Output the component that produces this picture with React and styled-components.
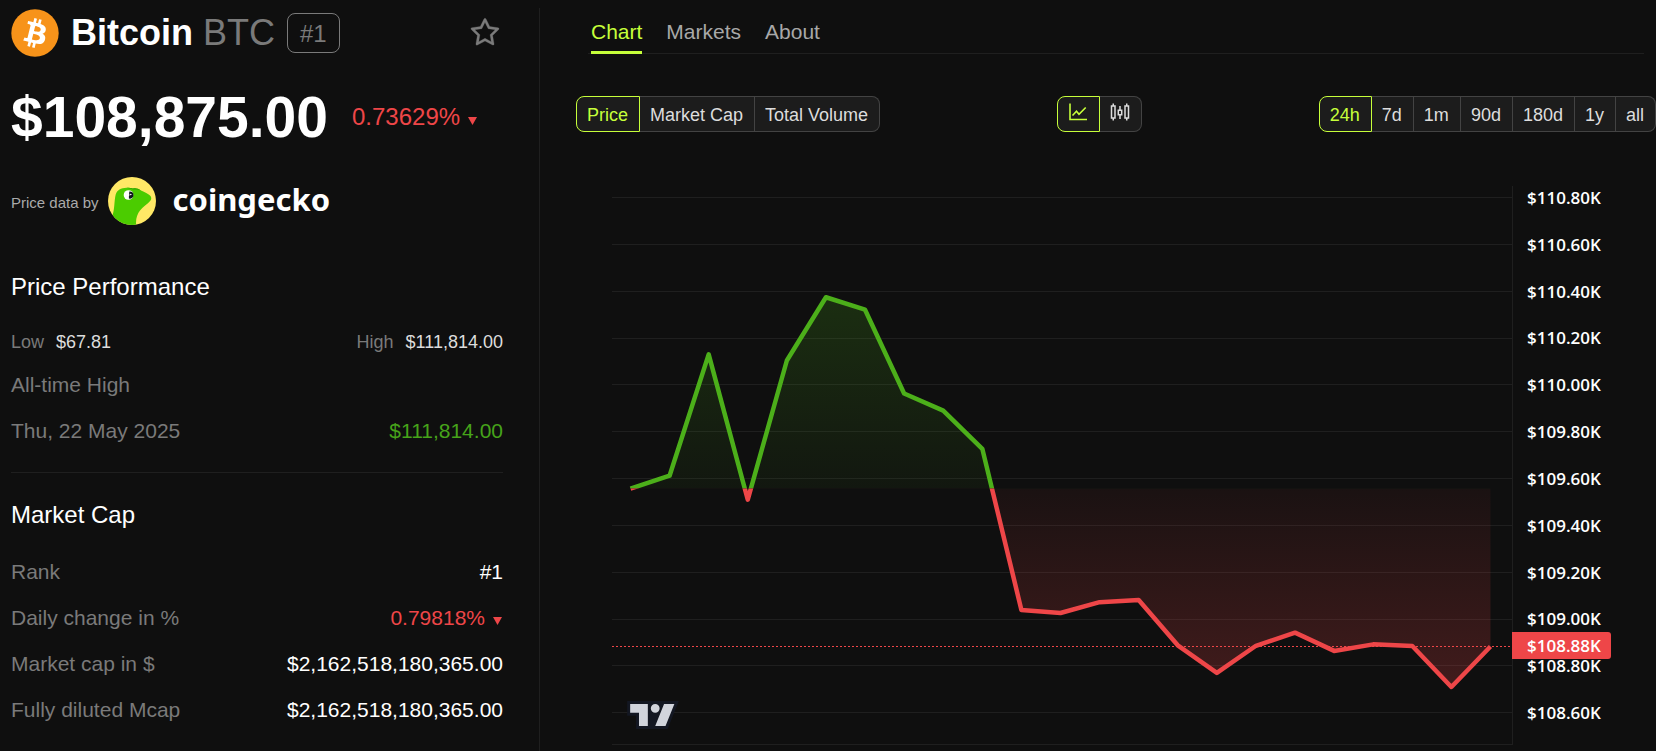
import React, { useState } from "react";
import { AiOutlineStar } from "react-icons/ai";
import styled, { createGlobalStyle } from "styled-components";

const PRICES = [
  109.557, 109.612, 110.13, 109.51, 110.104, 110.374, 110.321, 109.963, 109.89,
  109.727, 109.039, 109.026, 109.072, 109.081, 108.888, 108.77, 108.886,
  108.942, 108.864, 108.892, 108.885, 108.71, 108.883,
];
const TICKS = [
  110.8, 110.6, 110.4, 110.2, 110, 109.8, 109.6, 109.4, 109.2, 109, 108.8,
  108.6,
];
const CAP_ROWS = [
  { label: "Rank", value: "#1" },
  { label: "Daily change in %", value: "0.79818%", down: true },
  { label: "Market cap in $", value: "$2,162,518,180,365.00" },
  { label: "Fully diluted Mcap", value: "$2,162,518,180,365.00" },
];
const TABS = ["Chart", "Markets", "About"];
const METRICS = ["Price", "Market Cap", "Total Volume"];
const RANGES = ["24h", "7d", "1m", "90d", "180d", "1y", "all"];

const WIDTH = 900;
const HEIGHT = 559;

const toX = (i) => 18.5 + i * 39.09;
const toY = (price) => 11.5 + (110.8 - price) * 234.2;

const BitcoinLogo = () => (
  <svg width="48" height="48" viewBox="0 0 32 32" aria-hidden="true">
    <circle cx="16" cy="16" r="15.800" fill="#f7931a" />
    <path
      fill="#fff"
      d="M23.189 14.02c.314-2.096-1.283-3.223-3.465-3.975l.708-2.84-1.728-.43-.69 2.765c-.454-.114-.92-.22-1.385-.326l.695-2.783L15.596 6l-.708 2.839c-.376-.086-.746-.17-1.104-.26l.002-.009-2.384-.595-.46 1.846s1.283.294 1.256.312c.7.175.826.638.805 1.006l-.806 3.235c.048.012.11.03.18.057l-.183-.045-1.13 4.532c-.086.212-.303.531-.793.41.018.025-1.256-.313-1.256-.313l-.858 1.978 2.25.561c.418.105.828.215 1.231.318l-.715 2.872 1.727.43.708-2.84c.472.127.93.245 1.378.357l-.706 2.828 1.728.43.715-2.866c2.948.558 5.164.333 6.097-2.333.752-2.146-.037-3.385-1.588-4.192 1.13-.26 1.98-1.003 2.207-2.538zm-3.95 5.538c-.533 2.147-4.148.986-5.32.695l.95-3.805c1.172.293 4.929.872 4.37 3.11zm.535-5.569c-.487 1.953-3.495.96-4.47.717l.86-3.45c.975.243 4.118.696 3.61 2.733z"
    />
  </svg>
);

const GeckoLogo = () => (
  <svg width="48" height="48" viewBox="0 0 48 48" aria-hidden="true">
    <clipPath id="gecko-clip">
      <circle cx="24" cy="24" r="24" />
    </clipPath>
    <g clipPath="url(#gecko-clip)">
      <rect width="48" height="48" fill="#ffe866" />
      <path
        fill="#4bcc00"
        d="M4 40C7 32 6 24 7.700 17.500C9 13 13 11 18.500 10.800C21 10.300 23 11 25 11.600C27 10.800 30 11.200 33 13.500C37 15.500 40 16.500 42 18.500C43.600 20 43.600 22 42.500 23.500C40 27 35 29.500 32 33.500C29 37.500 27.500 42 28.200 49L8 49Z"
      />
      <path
        fill="#2fa000"
        d="M18.500 10.800C21 10.300 23 11 25 11.600C27 10.800 30 11.200 33 13.500C29 12.200 27.500 12.600 25 12.600C23 12 21 11.300 18.500 10.800Z"
      />
      <circle cx="20.500" cy="18" r="4.800" fill="#fff" />
      <path
        fill="#10181f"
        d="M21.300 14.500a3.600 3.600 0 1 1-.4 7v-2.500a1.300 1.300 0 0 0 .2-2z"
      />
      <circle cx="22.800" cy="17.500" r=".8" fill="#fff" />
    </g>
  </svg>
);

const LineIcon = () => (
  <svg width="20" height="20" viewBox="0 0 20 20" aria-hidden="true">
    <g fill="none" stroke="currentColor" strokeWidth="1.600">
      <path d="M2 1.500v16h17" />
      <path d="M4.500 13.500l4-4.200 2.500 3 6.700-6.800" />
    </g>
  </svg>
);

const CandlesIcon = () => (
  <svg width="20" height="20" viewBox="0 0 20 20" aria-hidden="true">
    <g fill="none" stroke="currentColor" strokeWidth="1.500">
      <path d="M1.500 4h3.500v12h-3.500zM8.300 8.300h3.400v4.500h-3.400zM15 4h3.500v12h-3.500z" />
      <path d="M3.250 1.500v2.500M3.250 16v2.500M10 4v4.300M10 12.800v4.200M16.750 1.500v2.500M16.750 16v2.500" />
    </g>
  </svg>
);

const TradingLogo = () => (
  <svg width="52" height="28" viewBox="0 0 35 19" aria-hidden="true">
    <path fill="#131722" d="M0 0h35l-7.600 19H6v-9H0z" />
    <path
      fill="#d1d4dc"
      d="M14 2H2v6h6v9h6V2Zm12 15h-7l6-15h7l-6 15Zm-7-9a3 3 0 1 0 0-6 3 3 0 0 0 0 6Z"
    />
  </svg>
);

const Change = ({ children, size }) => (
  <ChangeText $size={size}>
    {children}
    <svg width="9" height="8" viewBox="0 0 9 8" aria-label="down">
      <path d="M0 0h9L4.500 8z" fill="currentColor" />
    </svg>
  </ChangeText>
);

const Segmented = ({ label, options, value, onChange }) => (
  <SegmentGroup role="group" aria-label={label}>
    {options.map(({ id, content }) => (
      <Segment
        key={id}
        type="button"
        $active={id === value}
        aria-pressed={id === value}
        aria-label={id}
        onClick={() => onChange(id)}
      >
        {content}
      </Segment>
    ))}
  </SegmentGroup>
);

const PriceChart = () => {
  const base = toY(PRICES[0]);
  const last = toY(PRICES[PRICES.length - 1]);
  const line = PRICES.map((p, i) => `${toX(i)},${toY(p)}`).join(" ");
  const area = `${toX(0)},${base} ${line} ${toX(PRICES.length - 1)},${base}`;

  return (
    <ChartWrapper>
      <Plot>
        <svg
          viewBox={`0 0 ${WIDTH} ${HEIGHT}`}
          preserveAspectRatio="none"
          role="img"
          aria-label="Bitcoin price, last 24 hours"
        >
          <defs>
            <clipPath id="above">
              <rect width={WIDTH} height={base} />
            </clipPath>
            <clipPath id="below">
              <rect y={base} width={WIDTH} height={HEIGHT - base} />
            </clipPath>
            <linearGradient
              id="gain"
              gradientUnits="userSpaceOnUse"
              x1="0"
              y1="0"
              x2="0"
              y2={base}
            >
              <stop offset="0" stopColor="#4caf1a" stopOpacity=".28" />
              <stop offset="1" stopColor="#4caf1a" stopOpacity=".05" />
            </linearGradient>
            <linearGradient
              id="loss"
              gradientUnits="userSpaceOnUse"
              x1="0"
              y1={base}
              x2="0"
              y2={HEIGHT}
            >
              <stop offset="0" stopColor="#ee4648" stopOpacity=".05" />
              <stop offset="1" stopColor="#ee4648" stopOpacity=".28" />
            </linearGradient>
          </defs>
          {TICKS.map((t) => (
            <rect
              key={t}
              y={Math.floor(toY(t))}
              width={WIDTH}
              height="1"
              fill="#1f1f1f"
            />
          ))}
          <polygon points={area} fill="url(#gain)" clipPath="url(#above)" />
          <polygon points={area} fill="url(#loss)" clipPath="url(#below)" />
          <g fill="none" strokeWidth="4.500" strokeLinejoin="round">
            <polyline points={line} stroke="#4caf1a" clipPath="url(#above)" />
            <polyline points={line} stroke="#ee4648" clipPath="url(#below)" />
          </g>
          <line
            x2={WIDTH}
            y1={Math.floor(last) + 0.5}
            y2={Math.floor(last) + 0.5}
            stroke="#ee4648"
            strokeDasharray="2 2"
          />
        </svg>
        <Attribution href="#tradingview" aria-label="TradingView">
          <TradingLogo />
        </Attribution>
      </Plot>
      <Scale>
        {TICKS.map((t) => (
          <span key={t}>${t.toFixed(2)}K</span>
        ))}
        <LastPrice style={{ top: Math.round(last) - 14 }}>$108.88K</LastPrice>
      </Scale>
    </ChartWrapper>
  );
};

const asOptions = (names) => names.map((n) => ({ id: n, content: n }));

const App = () => {
  const [tab, setTab] = useState("Chart");
  const [metric, setMetric] = useState("Price");
  const [style, setStyle] = useState("Line");
  const [range, setRange] = useState("24h");

  return (
    <Page>
      <GlobalStyle />
      <Sidebar>
        <CoinHeader>
          <BitcoinLogo />
          <h1>
            Bitcoin <span>BTC</span>
          </h1>
          <RankBadge>#1</RankBadge>
          <StarButton type="button" aria-label="Add to favourites">
            <AiOutlineStar />
          </StarButton>
        </CoinHeader>
        <PriceRow>
          <strong>$108,875.00</strong>
          <Change size={24}>0.73629%</Change>
        </PriceRow>
        <Source>
          <small>Price data by</small>
          <SourceLink href="#coingecko">
            <GeckoLogo />
            <span>coingecko</span>
          </SourceLink>
        </Source>

        <Section>
          <h2>Price Performance</h2>
          <LowHigh>
            <p>
              Low <b>$67.81</b>
            </p>
            <p>
              High <b>$111,814.00</b>
            </p>
          </LowHigh>
          <Row>
            <span>All-time High</span>
          </Row>
          <Row $tone="#46a31a">
            <span>Thu, 22 May 2025</span>
            <b>$111,814.00</b>
          </Row>
        </Section>
        <Divider />
        <Section $second>
          <h2>Market Cap</h2>
          {CAP_ROWS.map(({ label, value, down }) => (
            <Row key={label}>
              <span>{label}</span>
              {down ? <Change size={21}>{value}</Change> : <b>{value}</b>}
            </Row>
          ))}
        </Section>
      </Sidebar>

      <Main>
        <Tabs>
          {TABS.map((name) => (
            <Tab
              key={name}
              href={`#${name.toLowerCase()}`}
              $active={name === tab}
              onClick={() => setTab(name)}
            >
              {name}
            </Tab>
          ))}
        </Tabs>
        <Toolbar>
          <Segmented
            label="Metric"
            options={asOptions(METRICS)}
            value={metric}
            onChange={setMetric}
          />
          <Segmented
            label="Chart style"
            options={[
              { id: "Line", content: <LineIcon /> },
              { id: "Candles", content: <CandlesIcon /> },
            ]}
            value={style}
            onChange={setStyle}
          />
          <Segmented
            label="Range"
            options={asOptions(RANGES)}
            value={range}
            onChange={setRange}
          />
        </Toolbar>
        <PriceChart />
      </Main>
    </Page>
  );
};

const GlobalStyle = createGlobalStyle`
  :root {
    --bg: #0f0f0f;
    --line: #1f1f1f;
    --muted: #7a7a7a;
    --accent: #c6ff3a;
    --red: #ee4648;
  }
  * {
    box-sizing: border-box;
    margin: 0;
    padding: 0;
  }
  body {
    background: var(--bg);
    color: #fff;
    font-family: "Liberation Sans", Arial, sans-serif;
  }
  svg {
    display: block;
    flex-shrink: 0;
  }
  a {
    color: inherit;
    text-decoration: none;
  }
`;

const Page = styled.div`
  display: grid;
  grid-template-columns: minmax(420px, 540px) 1fr;
  min-height: 100vh;
  padding-top: 8px;
`;

const Sidebar = styled.aside`
  padding: 1px 36px 0 11px;
  border-right: 1px solid var(--line);
`;

const CoinHeader = styled.header`
  display: flex;
  align-items: center;
  gap: 12px;
  h1 {
    font-size: 36px;
    line-height: 40px;
    white-space: nowrap;
    span {
      font-weight: 400;
      color: var(--muted);
    }
  }
`;

const RankBadge = styled.span`
  padding: 2px 12px 0;
  border: 1px solid var(--muted);
  border-radius: 8px;
  font-size: 24px;
  line-height: 36px;
  color: var(--muted);
`;

const StarButton = styled.button`
  display: grid;
  place-items: center;
  width: 36px;
  height: 36px;
  margin-left: auto;
  border: none;
  background: none;
  font-size: 34px;
  color: var(--muted);
  path {
    stroke: currentColor;
    stroke-width: 8px;
  }
`;

const PriceRow = styled.div`
  display: flex;
  align-items: center;
  gap: 24px;
  margin-top: 28px;
  strong {
    font-size: 57px;
    line-height: 64px;
  }
`;

const ChangeText = styled.span`
  display: flex;
  align-items: baseline;
  gap: 8px;
  padding-right: 1px;
  font-size: ${({ $size }) => $size}px;
  color: var(--red);
  svg {
    margin-bottom: -2px;
  }
`;

const Source = styled.div`
  display: flex;
  align-items: center;
  gap: 9px;
  margin-top: 28px;
  small {
    padding-top: 2px;
    font-size: 15px;
    color: #aaa;
  }
`;

const SourceLink = styled.a`
  display: flex;
  align-items: center;
  gap: 17px;
  span {
    padding-bottom: 4px;
    font-family: "Noto Sans", sans-serif;
    font-size: 31px;
    font-weight: 700;
    line-height: 40px;
  }
`;

const Section = styled.section`
  margin-top: ${({ $second }) => ($second ? 28 : 48)}px;
  h2 {
    margin-bottom: ${({ $second }) => ($second ? 20 : 31)}px;
    font-size: 24px;
    font-weight: 400;
    line-height: 28px;
  }
`;

const LowHigh = styled.div`
  display: flex;
  justify-content: space-between;
  margin-bottom: 10px;
  font-size: 18px;
  line-height: 20px;
  color: var(--muted);
  b {
    margin-left: 7px;
    font-weight: 400;
    color: #ddd;
  }
`;

const Row = styled.div`
  display: flex;
  align-items: center;
  justify-content: space-between;
  height: 46px;
  font-size: 21px;
  line-height: 24px;
  color: var(--muted);
  b {
    font-weight: 400;
    color: ${({ $tone }) => $tone || "#fff"};
  }
`;

const Divider = styled.hr`
  margin-top: 18px;
  border: none;
  border-top: 1px solid var(--line);
`;

const Main = styled.main`
  min-width: 0;
`;

const Tabs = styled.nav`
  display: flex;
  gap: 24px;
  margin: 0 12px 0 48px;
  padding-left: 3px;
  border-bottom: 1px solid var(--line);
`;

const Tab = styled.a`
  margin-bottom: -1px;
  padding: 12px 0 7px;
  border-bottom: 3px solid
    ${({ $active }) => ($active ? "var(--accent)" : "transparent")};
  font-size: 21px;
  line-height: 24px;
  color: ${({ $active }) => ($active ? "var(--accent)" : "#a8a8a8")};
`;

const Toolbar = styled.div`
  display: flex;
  justify-content: space-between;
  margin: 42px 0 54px 36px;
`;

const SegmentGroup = styled.div`
  display: flex;
`;

const Segment = styled.button`
  display: flex;
  align-items: center;
  height: 36px;
  padding: 2px 11px 0 10px;
  border: 1px solid #434343;
  border-left-width: 0;
  background: #1c1c1c;
  font-family: inherit;
  font-size: 18px;
  white-space: nowrap;
  color: #ddd;
  &:first-child {
    border-left-width: 1px;
    border-radius: 8px 0 0 8px;
  }
  &:last-child {
    border-radius: 0 8px 8px 0;
  }
  ${({ $active }) =>
    $active &&
    `
    border-color: var(--accent);
    color: var(--accent);
  `}
  svg {
    margin-bottom: 6px;
  }
`;

const ChartWrapper = styled.div`
  display: grid;
  grid-template-columns: 1fr 144px;
  height: 559px;
  padding-left: 72px;
`;

const Plot = styled.div`
  position: relative;
  min-width: 0;
  border-bottom: 1px solid var(--line);
  > svg {
    width: 100%;
    height: 559px;
    margin-bottom: -1px;
  }
`;

const Attribution = styled.a`
  position: absolute;
  left: 15px;
  bottom: 15px;
`;

const Scale = styled.div`
  position: relative;
  display: flex;
  flex-direction: column;
  justify-content: space-between;
  padding: 2px 0 22px 14px;
  border-left: 1px solid var(--line);
  font: 600 17px/20px "Open Sans", sans-serif;
`;

const LastPrice = styled.div`
  position: absolute;
  left: -1px;
  padding: 0 10px 0 15px;
  border-radius: 0 3px 3px 0;
  background: var(--red);
  line-height: 27px;
`;

export default App;
